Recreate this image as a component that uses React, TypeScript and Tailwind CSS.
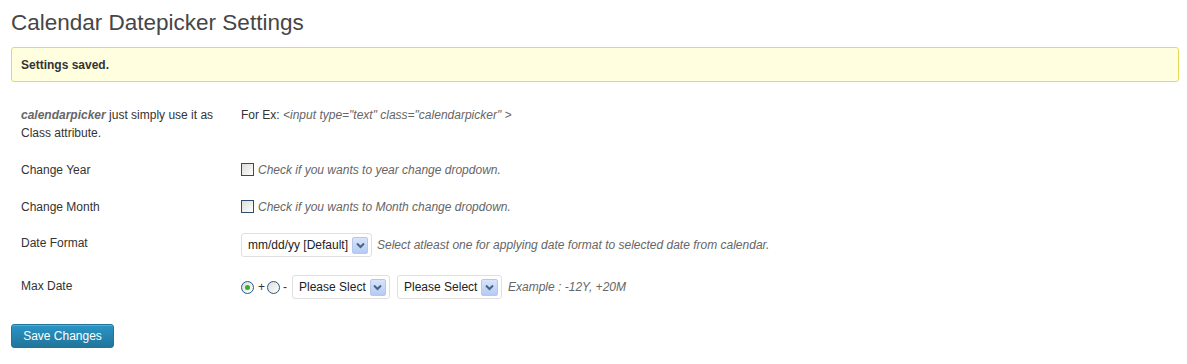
import React from "react";

const font = { fontFamily: '"Liberation Sans", Arial, sans-serif' };

function Arrow() {
  return (
    <span className="ml-[4px] flex h-[17px] w-[17px] items-center justify-center rounded-[2px] border border-[#b4c8ee] bg-gradient-to-b from-[#d8e4fb] to-[#b5cbf3]">
      <svg width="9" height="7" viewBox="0 0 9 7">
        <path d="M1 1.5 L4.5 5 L8 1.5" fill="none" stroke="#4d6185" strokeWidth="2" />
      </svg>
    </span>
  );
}

function Select({ label, w }: { label: string; w: string }) {
  return (
    <div className={`flex h-[24px] items-center justify-between rounded-[3px] border border-[#dfdfdf] bg-white pl-[6px] pr-[3px] text-[12px] text-[#222] ${w}`}>
      <span className="whitespace-nowrap">{label}</span>
      <Arrow />
    </div>
  );
}

function Checkbox() {
  return (
    <span className="inline-block h-[13px] w-[13px] shrink-0 border border-[#2d4c6e] bg-gradient-to-br from-[#dcdcd7] to-[#ffffff]" />
  );
}

function Radio({ checked }: { checked?: boolean }) {
  return (
    <span className="flex h-[13px] w-[13px] shrink-0 items-center justify-center rounded-full border border-[#2d5580] bg-gradient-to-br from-[#dcdcd7] to-[#ffffff]">
      {checked && <span className="h-[5px] w-[5px] rounded-full bg-[#2cb52c]" />}
    </span>
  );
}

export default function App() {
  return (
    <div className="min-h-[364px] w-[1187px] bg-white px-[11px] text-[12px] text-[#333]" style={font}>
      <h2 className="pt-[8px] text-[22.5px] leading-[29px] font-normal text-[#464646]">
        Calendar Datepicker Settings
      </h2>
      <div className="mt-[10px] mr-[-3px] flex h-[35px] items-center rounded-[3px] border border-[#e6db55] bg-[#ffffe0] px-[9px]">
        <span className="font-bold text-[#333]">Settings saved.</span>
      </div>

      <div className="mt-[15px]">
        {/* Row 1 */}
        <div className="flex h-[54px] items-start pt-[9px] leading-[18px]">
          <div className="w-[230px] shrink-0 pl-[10px] pr-[10px]">
            <em className="font-bold text-[#666]">calendarpicker</em>{" "}just simply use it as Class attribute.
          </div>
          <div>
            For Ex: <em className="text-[#666]">&lt;input type="text" class="calendarpicker" &gt;</em>
          </div>
        </div>

        {/* Row 2 */}
        <div className="flex h-[37px] items-center">
          <div className="w-[230px] shrink-0 pl-[10px]">Change Year</div>
          <div className="flex items-center gap-[4px]">
            <Checkbox />
            <em className="text-[#666]">Check if you wants to year change dropdown.</em>
          </div>
        </div>

        {/* Row 3 */}
        <div className="flex h-[37px] items-center">
          <div className="w-[230px] shrink-0 pl-[10px]">Change Month</div>
          <div className="flex items-center gap-[4px]">
            <Checkbox />
            <em className="text-[#666]">Check if you wants to Month change dropdown.</em>
          </div>
        </div>

        {/* Row 4 */}
        <div className="flex h-[40px] items-center">
          <div className="-mt-[4px] w-[230px] shrink-0 pl-[10px]">Date Format</div>
          <div className="flex items-center gap-[5px]">
            <Select label="mm/dd/yy [Default]" w="w-[131px]" />
            <em className="text-[#666]">Select atleast one for applying date format to selected date from calendar.</em>
          </div>
        </div>

        {/* Row 5 */}
        <div className="flex h-[44px] items-center">
          <div className="-mt-[2px] w-[230px] shrink-0 pl-[10px]">Max Date</div>
          <div className="flex items-center">
            <Radio checked />
            <span className="ml-[4px] mr-[2px]">+</span>
            <Radio />
            <span className="ml-[3px] mr-[5px]">-</span>
            <Select label="Please Slect" w="w-[98px]" />
            <div className="ml-[7px]">
              <Select label="Please Select" w="w-[105px]" />
            </div>
            <em className="ml-[6px] text-[#666]">Example : -12Y, +20M</em>
          </div>
        </div>
      </div>

      <button className="mt-[15px] h-[24px] w-[103px] rounded-[3px] border border-[#21759b] bg-gradient-to-b from-[#2a95c5] to-[#21759b] text-[12px] text-white shadow-[inset_0_1px_0_rgba(120,200,230,0.5)]">
        Save Changes
      </button>
    </div>
  );
}
